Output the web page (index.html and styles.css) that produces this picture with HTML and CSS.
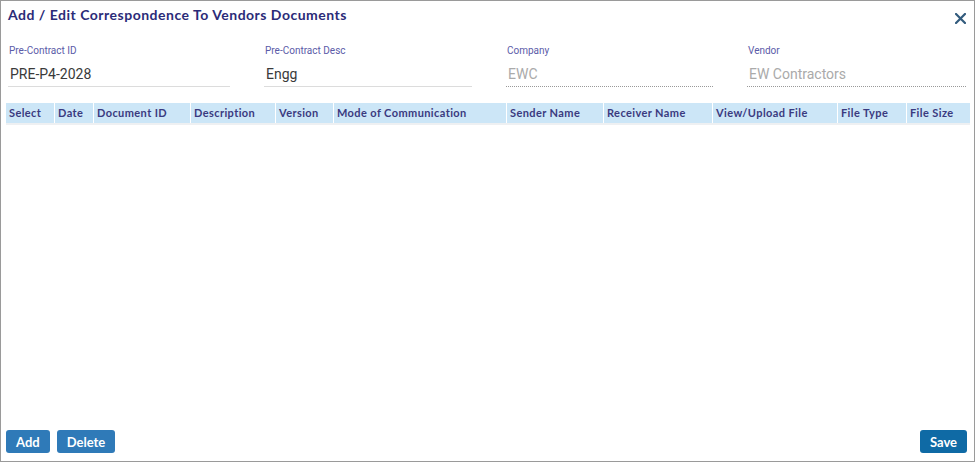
FILE: index.html
```html
<!DOCTYPE html>
<html>
<head>
<meta charset="utf-8">
<link rel="stylesheet" href="styles.css">
</head>
<body>
<div class="dialog">
  <div class="titlebar">
    <h1 class="title">Add / Edit Correspondence To Vendors Documents</h1>
    <span class="close">
      <svg width="11" height="11" viewBox="0 0 11 11"><path d="M1 1 L10 10 M10 1 L1 10" stroke="#325b7d" stroke-width="2.2" stroke-linecap="square"/></svg>
    </span>
  </div>
  <div class="fields">
    <div class="field f1">
      <label class="label">Pre-Contract ID</label>
      <div class="value">PRE-P4-2028</div>
    </div>
    <div class="field f2">
      <label class="label">Pre-Contract Desc</label>
      <div class="value">Engg</div>
    </div>
    <div class="field f3 disabled">
      <label class="label">Company</label>
      <div class="value">EWC</div>
    </div>
    <div class="field f4 disabled">
      <label class="label">Vendor</label>
      <div class="value">EW Contractors</div>
    </div>
  </div>
  <div class="table">
    <div class="thead">
      <div class="th" style="width:48px">Select</div>
      <div class="th" style="width:38px">Date</div>
      <div class="th" style="width:96px">Document ID</div>
      <div class="th" style="width:84px">Description</div>
      <div class="th" style="width:57px">Version</div>
      <div class="th" style="width:172px">Mode of Communication</div>
      <div class="th" style="width:96px">Sender Name</div>
      <div class="th" style="width:108px">Receiver Name</div>
      <div class="th" style="width:124px">View/Upload File</div>
      <div class="th" style="width:68px">File Type</div>
      <div class="th last">File Size</div>
    </div>
  </div>
  <div class="footer">
    <div class="left">
      <button class="btn">Add</button>
      <button class="btn">Delete</button>
    </div>
    <button class="btn save">Save</button>
  </div>
</div>
</body>
</html>
```

FILE: styles.css
```css
* { box-sizing: border-box; }
html, body { margin: 0; padding: 0; background: #fff; }
.dialog {
  width: 975px;
  height: 462px;
  border: 1px solid #9a9a9a;
  display: flex;
  flex-direction: column;
  font-family: Lato, "Liberation Sans", sans-serif;
}
.titlebar {
  display: flex;
  justify-content: space-between;
  align-items: flex-start;
  padding: 5px 7px 0 7px;
  height: 44px;
}
.title {
  margin: 0;
  font-size: 14px;
  font-weight: 700;
  color: #2b2b78;
  letter-spacing: 0.5px;
}
.close { padding-top: 7px; padding-right: 1px; line-height: 0; }
.fields {
  display: flex;
  gap: 34px;
  padding: 0 7px;
}
.field { display: flex; flex-direction: column; }
.f1 { width: 222px; }
.f2 { width: 208px; }
.f3 { width: 207px; }
.f4 { width: 219px; }
.label {
  font-family: Roboto, sans-serif;
  font-size: 10px;
  color: #5b5ba8;
  height: 14px;
  line-height: 12px;
  padding-left: 1px;
}
.value {
  font-family: Roboto, sans-serif;
  font-size: 14px;
  color: #3a3a3a;
  height: 28px;
  padding: 7px 0 0 2px;
  border-bottom: 1px solid #dcdcdc;
}
.disabled .value {
  color: #aaa;
  border-bottom: 1px dotted #999;
}
.table {
  flex: 1;
  padding: 16px 4px 0 5px;
}
.thead {
  display: flex;
  gap: 1px;
  border-bottom: 2px solid #eef0f2;
}
.th {
  background: #cce6f7;
  height: 20px;
  line-height: 20px;
  padding-left: 3px;
  font-size: 11px;
  font-weight: 700;
  color: #3a3a80;
  letter-spacing: 0.4px;
  white-space: nowrap;
}
.th.last { flex: 1; }
.footer {
  display: flex;
  justify-content: space-between;
  align-items: flex-end;
  padding: 0 7px 8px 5px;
}
.left { display: flex; gap: 7px; }
.btn {
  font-family: Lato, "Liberation Sans", sans-serif;
  font-size: 13px;
  font-weight: 700;
  color: #fff;
  background: #2f7ab8;
  border: none;
  border-radius: 3px;
  height: 23px;
  padding: 0 10px;
}
.save { background: #0f6aa5; }
```
